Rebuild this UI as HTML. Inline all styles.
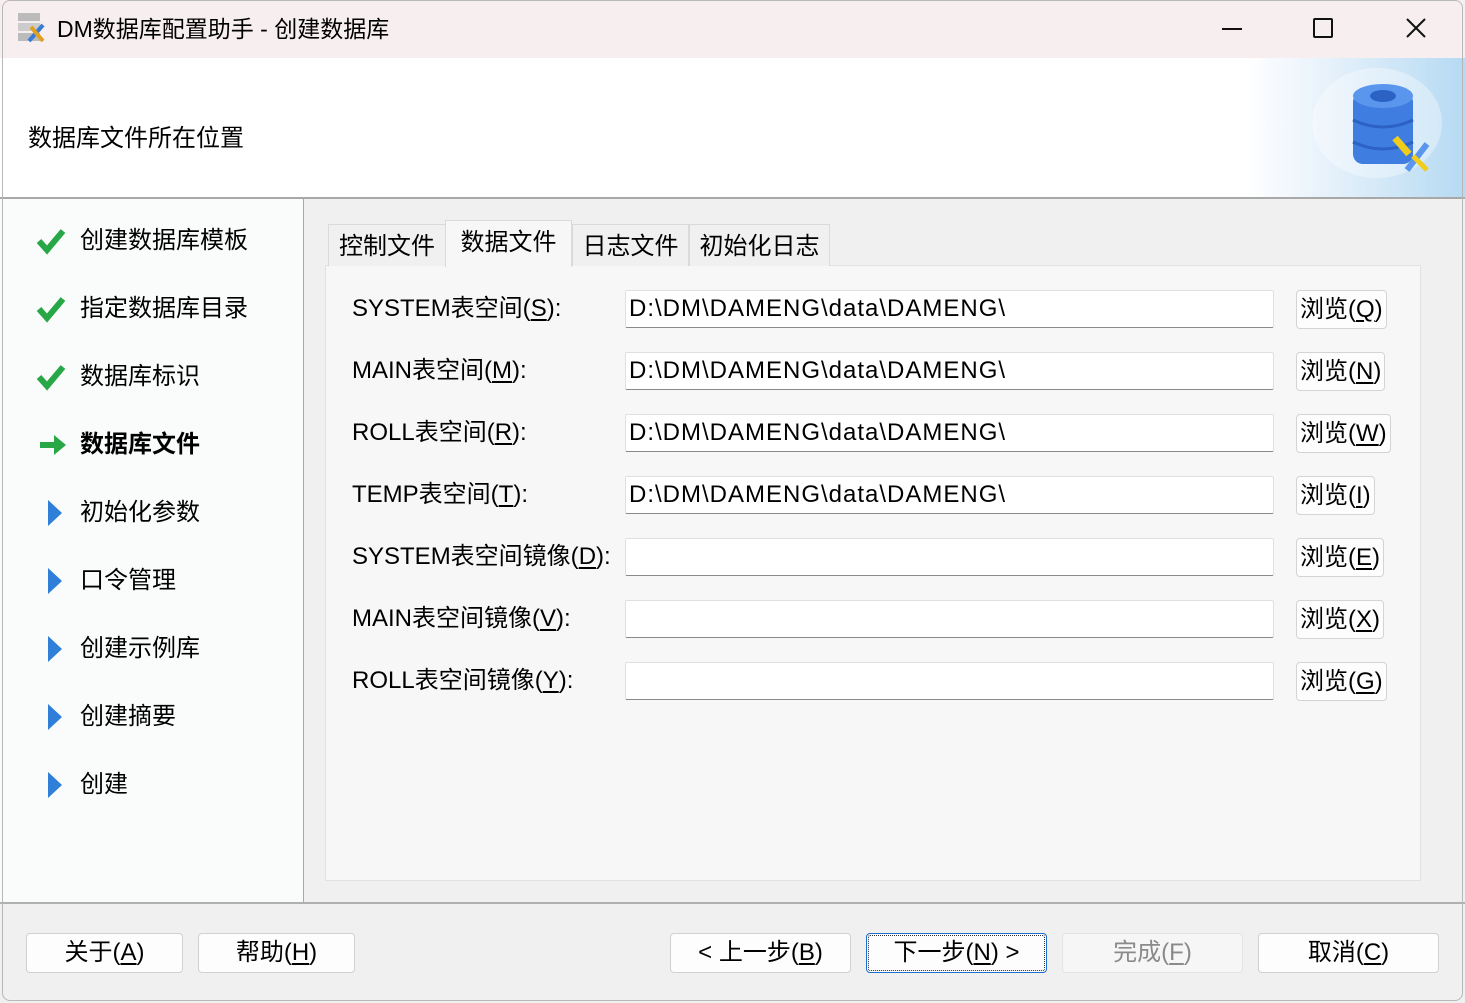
<!DOCTYPE html>
<html><head><meta charset="utf-8"><style>
*{margin:0;padding:0;box-sizing:border-box}
body{width:1465px;height:1003px;overflow:hidden;background:#fff;font-family:"Liberation Sans","Noto Sans CJK SC",sans-serif;color:#000;position:relative}
.a{position:absolute}
.win{left:0;top:0;width:1465px;height:1003px;overflow:hidden;background:#f0f0f0}
.bord{left:2px;top:0;width:1461px;height:1001px;border:1px solid #b8b8b8;border-radius:8px;pointer-events:none}
.t{font-size:24px;white-space:nowrap;line-height:30px}
.inp{background:#fff;border:1px solid #e0e0e0;border-bottom:1px solid #8a8a8a;border-radius:2px;height:38px;width:649px;left:625px;font-size:24px;line-height:36px;padding-left:3px;letter-spacing:1px}
.br{background:#fdfdfd;border:1px solid #d4d4d4;border-radius:4px;height:39px;font-size:24px;line-height:37px;padding:0 3px;left:1296px}
.btn{background:#fdfdfd;border:1px solid #d0d0d0;border-radius:4px;height:40px;top:933px;font-size:24px;line-height:38px;text-align:center}
u{text-decoration:underline;text-underline-offset:3px}
.tab{top:224px;height:42px;background:#f0f0f0;border:1px solid #dadada;border-bottom:none;font-size:24px;line-height:44px;text-align:center}
</style></head><body>
<div class="a win">
 <div class="a" style="left:0;top:0;width:1465px;height:58px;background:#f7efef"></div>
 <svg class="a" style="left:15px;top:11px" width="34" height="34" viewBox="0 0 34 34">
  <rect x="3" y="2" width="22" height="8" fill="#bbb"/><rect x="3" y="12" width="22" height="8" fill="#ccc"/><rect x="3" y="22" width="22" height="8" fill="#bbb"/>
  <path d="M14 30 L28 14" stroke="#3a7bd5" stroke-width="4"/><path d="M16 16 L28 30" stroke="#e0a020" stroke-width="4"/>
 </svg>
 <div class="a" style="left:57px;top:14px;font-size:23px;line-height:30px">DM数据库配置助手 - 创建数据库</div>
 <div class="a" style="left:1222px;top:28px;width:20px;height:2px;background:#111"></div>
 <div class="a" style="left:1313px;top:18px;width:20px;height:20px;border:2px solid #111;border-radius:2px"></div>
 <svg class="a" style="left:1405px;top:17px" width="22" height="22"><path d="M2 2L20 20M20 2L2 20" stroke="#111" stroke-width="2"/></svg>

 <div class="a" style="left:0;top:58px;width:1465px;height:139px;background:linear-gradient(90deg,#fff 0,#fff 1245px,#e6f1fb 1330px,#b5daf3 1465px)"></div>
 <div class="a" style="left:1312px;top:68px;width:130px;height:110px;border-radius:50%;background:rgba(255,255,255,.35)"></div>
 <svg class="a" style="left:1347px;top:82px" width="90" height="96" viewBox="0 0 90 96">
  <rect x="6" y="10" width="60" height="72" rx="10" fill="#3f7ee0"/>
  <ellipse cx="36" cy="14" rx="30" ry="12" fill="#5a96ee"/><ellipse cx="36" cy="14" rx="13" ry="6" fill="#2b62c4"/>
  <path d="M6 38 Q36 52 66 38" stroke="#2b62c4" stroke-width="3" fill="none"/><path d="M6 60 Q36 74 66 60" stroke="#2b62c4" stroke-width="3" fill="none"/>
  <path d="M48 56 L62 72" stroke="#f2cc1b" stroke-width="7"/><path d="M60 88 L80 62" stroke="#5a96ee" stroke-width="6"/><path d="M66 74 L80 88" stroke="#f2cc1b" stroke-width="5"/>
 </svg>
 <div class="a t" style="left:28px;top:124px">数据库文件所在位置</div>
 <div class="a" style="left:0;top:197px;width:1465px;height:2px;background:#a8a8a8"></div>

 <div class="a" style="left:0;top:199px;width:304px;height:703px;background:#fafbfb;border-right:1px solid #a8a8a8"></div>
 <svg class="a" style="left:36px;top:227px" width="30" height="28"><path d="M3 14 L11 23 L27 4" stroke="#27a745" stroke-width="6" fill="none"/></svg>
 <div class="a t" style="left:80px;top:226px">创建数据库模板</div>
 <svg class="a" style="left:36px;top:295px" width="30" height="28"><path d="M3 14 L11 23 L27 4" stroke="#27a745" stroke-width="6" fill="none"/></svg>
 <div class="a t" style="left:80px;top:294px">指定数据库目录</div>
 <svg class="a" style="left:36px;top:363px" width="30" height="28"><path d="M3 14 L11 23 L27 4" stroke="#27a745" stroke-width="6" fill="none"/></svg>
 <div class="a t" style="left:80px;top:362px">数据库标识</div>
 <svg class="a" style="left:38px;top:433px" width="30" height="24"><path d="M2 9 H16 V2 L28 12 L16 22 V15 H2 Z" fill="#27a745"/></svg>
 <div class="a t" style="left:80px;top:430px;font-weight:bold">数据库文件</div>
 <svg class="a" style="left:46px;top:499px" width="18" height="28"><path d="M2 1 L16 14 L2 27Z" fill="#2f7fd8"/></svg>
 <div class="a t" style="left:80px;top:498px">初始化参数</div>
 <svg class="a" style="left:46px;top:567px" width="18" height="28"><path d="M2 1 L16 14 L2 27Z" fill="#2f7fd8"/></svg>
 <div class="a t" style="left:80px;top:566px">口令管理</div>
 <svg class="a" style="left:46px;top:635px" width="18" height="28"><path d="M2 1 L16 14 L2 27Z" fill="#2f7fd8"/></svg>
 <div class="a t" style="left:80px;top:634px">创建示例库</div>
 <svg class="a" style="left:46px;top:703px" width="18" height="28"><path d="M2 1 L16 14 L2 27Z" fill="#2f7fd8"/></svg>
 <div class="a t" style="left:80px;top:702px">创建摘要</div>
 <svg class="a" style="left:46px;top:771px" width="18" height="28"><path d="M2 1 L16 14 L2 27Z" fill="#2f7fd8"/></svg>
 <div class="a t" style="left:80px;top:770px">创建</div>

 <div class="a" style="left:325px;top:265px;width:1096px;height:616px;background:#f7f7f7;border:1px solid #e2e2e2"></div>
 <div class="a tab" style="left:328px;width:118px">控制文件</div>
 <div class="a tab" style="left:445px;top:220px;height:47px;width:127px;background:#f7f7f7;line-height:44px">数据文件</div>
 <div class="a tab" style="left:572px;width:117px">日志文件</div>
 <div class="a tab" style="left:689px;width:141px">初始化日志</div>

 <div class="a t" style="left:352px;top:294px">SYSTEM表空间(<u>S</u>):</div>
 <div class="a inp" style="top:290px">D:\DM\DAMENG\data\DAMENG\</div>
 <div class="a br" style="top:290px">浏览(<u>Q</u>)</div>
 <div class="a t" style="left:352px;top:356px">MAIN表空间(<u>M</u>):</div>
 <div class="a inp" style="top:352px">D:\DM\DAMENG\data\DAMENG\</div>
 <div class="a br" style="top:352px">浏览(<u>N</u>)</div>
 <div class="a t" style="left:352px;top:418px">ROLL表空间(<u>R</u>):</div>
 <div class="a inp" style="top:414px">D:\DM\DAMENG\data\DAMENG\</div>
 <div class="a br" style="top:414px">浏览(<u>W</u>)</div>
 <div class="a t" style="left:352px;top:480px">TEMP表空间(<u>T</u>):</div>
 <div class="a inp" style="top:476px">D:\DM\DAMENG\data\DAMENG\</div>
 <div class="a br" style="top:476px">浏览(<u>I</u>)</div>
 <div class="a t" style="left:352px;top:542px">SYSTEM表空间镜像(<u>D</u>):</div>
 <div class="a inp" style="top:538px"></div>
 <div class="a br" style="top:538px">浏览(<u>E</u>)</div>
 <div class="a t" style="left:352px;top:604px">MAIN表空间镜像(<u>V</u>):</div>
 <div class="a inp" style="top:600px"></div>
 <div class="a br" style="top:600px">浏览(<u>X</u>)</div>
 <div class="a t" style="left:352px;top:666px">ROLL表空间镜像(<u>Y</u>):</div>
 <div class="a inp" style="top:662px"></div>
 <div class="a br" style="top:662px">浏览(<u>G</u>)</div>

 <div class="a" style="left:0;top:902px;width:1465px;height:2px;background:#b0b0b0"></div>
 <div class="a btn" style="left:26px;width:157px">关于(<u>A</u>)</div>
 <div class="a btn" style="left:198px;width:157px">帮助(<u>H</u>)</div>
 <div class="a btn" style="left:670px;width:181px">&lt; 上一步(<u>B</u>)</div>
 <div class="a btn" style="left:866px;width:181px;border:1px solid #1a6fd0;outline:1px dotted #333;outline-offset:-3px">下一步(<u>N</u>) &gt;</div>
 <div class="a btn" style="left:1062px;width:181px;color:#8a8a8a;background:#f6f6f6;border-color:#e4e4e4">完成(<u>F</u>)</div>
 <div class="a btn" style="left:1258px;width:181px">取消(<u>C</u>)</div>
</div>
<div class="a bord"></div>
</body></html>
